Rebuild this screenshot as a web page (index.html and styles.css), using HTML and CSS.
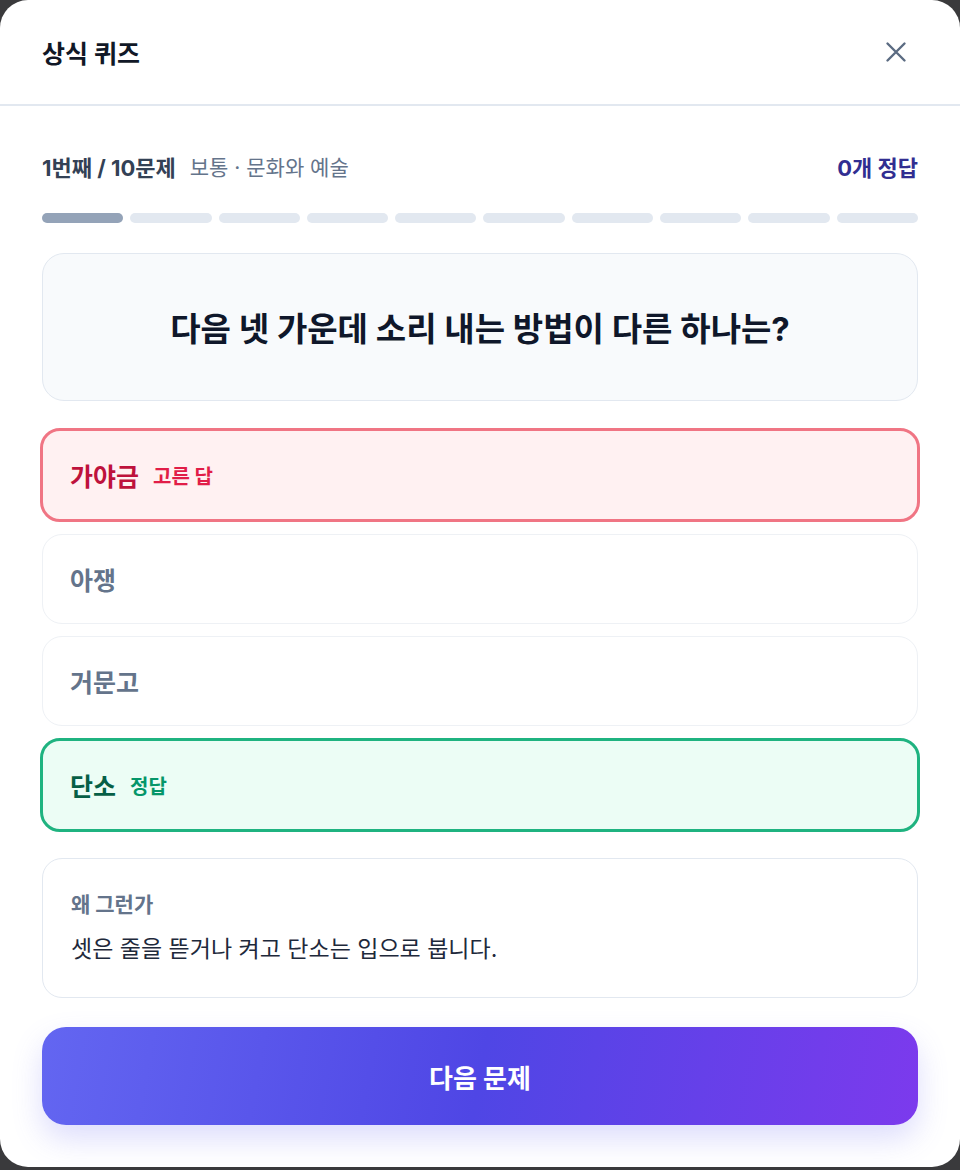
FILE: index.html
```html
<!DOCTYPE html>
<html lang="ko">
<head>
    <meta charset="utf-8">
    <title>상식 퀴즈</title>
    <link rel="stylesheet" href="styles.css">
</head>
<body>
<div class="modal">
    <div class="head">
        <span class="head-title">상식 퀴즈</span>
        <span class="close" title="닫기">
            <svg width="24" height="24" viewBox="0 0 24 24" fill="none" stroke="currentColor" stroke-width="2.4" stroke-linecap="round">
                <path d="M3.5 3.5 L20.5 20.5 M20.5 3.5 L3.5 20.5"/>
            </svg>
        </span>
    </div>
    <div class="body">
        <div class="meta">
            <span class="count">1번째 / 10문제</span>
            <span class="sub">보통 · 문화와 예술</span>
            <span class="score">0개 정답</span>
        </div>
        <div class="progress">
            <span class="seg done"></span>
            <span class="seg"></span>
            <span class="seg"></span>
            <span class="seg"></span>
            <span class="seg"></span>
            <span class="seg"></span>
            <span class="seg"></span>
            <span class="seg"></span>
            <span class="seg"></span>
            <span class="seg"></span>
        </div>
        <div class="question">다음 넷 가운데 소리 내는 방법이 다른 하나는?</div>
        <div class="options">
            <div class="opt wrong">가야금 <span class="tag">고른 답</span></div>
            <div class="opt">아쟁</div>
            <div class="opt">거문고</div>
            <div class="opt right">단소 <span class="tag">정답</span></div>
        </div>
        <div class="why">
            <div class="why-label">왜 그런가</div>
            <div class="why-text">셋은 줄을 뜯거나 켜고 단소는 입으로 붑니다.</div>
        </div>
        <button class="btn-next" type="button">다음 문제</button>
    </div>
</div>
</body>
</html>
```

FILE: styles.css
```css
* {
    box-sizing: border-box;
}

body {
    margin: 0;
    background: #3a3a3c;
    font-family: Inter, "Noto Sans CJK KR", sans-serif;
    color: #0f172a;
    --slate: #64748b;
    --line: #e2e8f0;
}

.modal {
    width: 960px;
    height: 1167px;
    background: #fff;
    border-radius: 28px;
    overflow: hidden;
}

.head {
    display: flex;
    align-items: center;
    justify-content: space-between;
    height: 106px;
    padding: 0 42px;
    border-bottom: 2px solid var(--line);
}

.head-title {
    font-size: 25px;
    font-weight: 700;
    color: #111827;
}

.close {
    display: flex;
    color: #5b6b82;
    margin-right: 10px;
}

.body {
    padding: 44px 42px 42px;
}

.meta {
    display: flex;
    align-items: center;
    height: 32px;
    font-size: 21px;
}

.meta .count {
    font-size: 22px;
    font-weight: 700;
    color: #334155;
}

.meta .sub {
    margin-left: 14px;
    color: var(--slate);
}

.meta .score {
    margin-left: auto;
    font-size: 22px;
    font-weight: 700;
    color: #312e91;
}

.progress {
    display: flex;
    gap: 7px;
    margin-top: 31px;
}

.seg {
    flex: 1;
    height: 10px;
    border-radius: 5px;
    background: var(--line);
}

.seg.done {
    background: #94a3b8;
}

.question {
    margin-top: 30px;
    height: 148px;
    display: flex;
    align-items: center;
    justify-content: center;
    background: #f8fafc;
    border: 1.5px solid var(--line);
    border-radius: 22px;
    font-size: 33px;
    font-weight: 700;
    color: #0f172a;
}

.options {
    display: flex;
    flex-direction: column;
    gap: 12px;
    margin-top: 27px;
}

.opt {
    display: flex;
    align-items: center;
    height: 90px;
    padding: 0 27px;
    border: 1px solid #eef1f5;
    border-radius: 20px;
    font-size: 25px;
    font-weight: 700;
    color: var(--slate);
}

.opt .tag {
    font-size: 20px;
    margin-left: 14px;
}

.opt.wrong, .opt.right {
    height: 94px;
    margin: 0 -2px;
    border-width: 3px;
}

.opt.wrong {
    background: #fff1f2;
    border-color: #f07584;
    color: #be123c;
}

.opt.wrong .tag {
    color: #e11d48;
}

.opt.right {
    background: #ecfdf5;
    border-color: #1fb380;
    color: #065f46;
}

.opt.right .tag {
    color: #059669;
}

.why {
    margin-top: 26px;
    height: 140px;
    padding: 32px 28px 0;
    border: 1.5px solid var(--line);
    border-radius: 20px;
}

.why-label {
    font-size: 21px;
    font-weight: 700;
    color: var(--slate);
    line-height: 28px;
}

.why-text {
    margin-top: 14px;
    font-size: 23px;
    color: #1e293b;
    line-height: 32px;
}

.btn-next {
    display: block;
    width: 100%;
    height: 98px;
    margin-top: 29px;
    border: 0;
    border-radius: 24px;
    background: linear-gradient(100deg, #6366f1 0%, #4f46e5 50%, #7c3aed 100%);
    box-shadow: 0 14px 30px rgba(99, 102, 241, 0.22);
    font-family: inherit;
    font-size: 26px;
    font-weight: 700;
    color: #fff;
    cursor: pointer;
}
```
